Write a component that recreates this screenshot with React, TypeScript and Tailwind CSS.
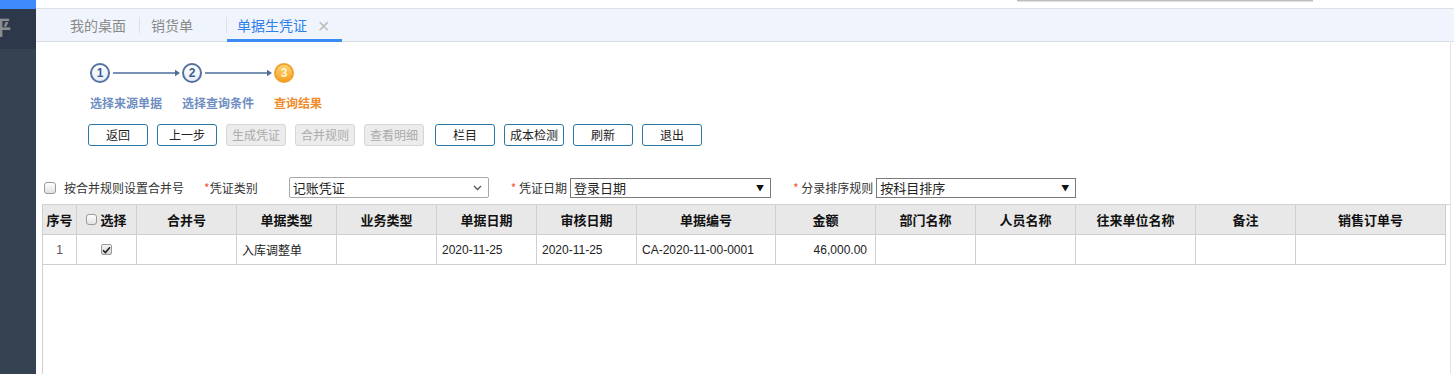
import React from "react";

const cjk = { fontFamily: '"Microsoft YaHei","Noto Sans CJK SC","Liberation Sans",sans-serif' };
const num = { fontFamily: '"Liberation Sans","Noto Sans CJK SC",sans-serif' };

function Circle({ n, active }: { n: number; active?: boolean }) {
  return active ? (
    <div className="w-[20px] h-[20px] rounded-full border-2 border-[#f0a030] bg-gradient-to-b from-[#ffd36a] to-[#f7a11a] flex items-center justify-center text-[12px] font-bold text-[#fff6d8] leading-none" style={num}>
      {n}
    </div>
  ) : (
    <div className="w-[20px] h-[20px] rounded-full border-2 border-[#52729f] bg-gradient-to-b from-white to-[#e6edf7] flex items-center justify-center text-[12px] font-bold text-[#3f5f8f] leading-none" style={num}>
      {n}
    </div>
  );
}

function Arrow() {
  return (
    <svg width="72" height="8" viewBox="0 0 72 8" className="shrink-0">
      <line x1="3" y1="4" x2="66" y2="4" stroke="#4d6c99" strokeWidth="1.3" />
      <path d="M65 0.8 L70 4 L65 7.2 Z" fill="#4d6c99" />
    </svg>
  );
}

function Btn({ label, disabled }: { label: string; disabled?: boolean }) {
  return disabled ? (
    <div className="w-[60px] h-[22px] rounded-[3px] border border-[#d6d6d6] bg-[#ececec] text-[#ababab] text-[12px] flex items-center justify-center">{label}</div>
  ) : (
    <div className="w-[60px] h-[22px] rounded-[3px] border border-[#2a78a8] bg-white text-[#222] text-[12px] flex items-center justify-center">{label}</div>
  );
}

const cols: { t: string; w: number }[] = [
  { t: "序号", w: 34 },
  { t: "选择", w: 60 },
  { t: "合并号", w: 100 },
  { t: "单据类型", w: 100 },
  { t: "业务类型", w: 100 },
  { t: "单据日期", w: 100 },
  { t: "审核日期", w: 100 },
  { t: "单据编号", w: 139 },
  { t: "金额", w: 100 },
  { t: "部门名称", w: 100 },
  { t: "人员名称", w: 100 },
  { t: "往来单位名称", w: 120 },
  { t: "备注", w: 100 },
  { t: "销售订单号", w: 150 },
];

export default function App() {
  return (
    <div className="w-[1454px] h-[374px] overflow-hidden flex bg-white" style={cjk}>
      {/* sidebar */}
      <div className="w-[36px] shrink-0 flex flex-col bg-[#354252]">
        <div className="h-[9px] bg-[#3d8bfd]" />
        <div className="h-[40px] bg-[#2d394a] overflow-hidden relative">
          <span className="absolute left-[-9px] top-[8px] text-[20px] text-[#8a8f96] font-bold leading-none">平</span>
        </div>
        <div className="flex-1" />
      </div>

      {/* main */}
      <div className="flex-1 flex flex-col min-w-0">
        <div className="h-[8px] relative">
          <div className="absolute left-[981px] top-0 w-[296px] h-[1px] bg-[#bdbdbd] shadow-[0_1px_1px_rgba(0,0,0,0.15)]" />
        </div>
        <div className="h-[34px] bg-[#f0f5fd] border-t border-b border-[#dcdfe3] flex items-stretch pl-[34px] text-[14px]">
          <div className="flex items-center text-[#8a8a8a] pr-[13px]">我的桌面</div>
          <div className="w-[1px] bg-[#dde1e6] my-[8px]" />
          <div className="flex items-center text-[#8a8a8a] px-[11px] pr-[33px]">销货单</div>
          <div className="w-[1px] bg-[#dde1e6] my-[8px]" />
          <div className="relative flex items-center pl-[10px] w-[115px] text-[#2f80ed]">
            单据生凭证
            <span className="ml-[10px] text-[#bfbfbf] text-[16px] leading-none">✕</span>
            <div className="absolute left-0 right-0 bottom-[-1px] h-[3px] bg-[#3b8cf5]" />
          </div>
        </div>

        <div className="flex-1 border-r border-[#e4e4e4] mr-[3px] flex flex-col">
          {/* steps */}
          <div className="pl-[54px] pt-[21px] flex items-center h-[41px]">
            <Circle n={1} />
            <Arrow />
            <Circle n={2} />
            <Arrow />
            <Circle n={3} active />
          </div>
          <div className="pl-[54px] pt-[12px] flex text-[12px] font-semibold leading-[16px]">
            <div className="w-[92px] text-[#6e8dc0]">选择来源单据</div>
            <div className="w-[92px] text-[#6e8dc0]">选择查询条件</div>
            <div className="text-[#f08c2c]">查询结果</div>
          </div>
          <div className="pl-[52px] pt-[13px] flex gap-[9px]">
            <Btn label="返回" />
            <Btn label="上一步" />
            <Btn label="生成凭证" disabled />
            <Btn label="合并规则" disabled />
            <Btn label="查看明细" disabled />
            <div className="ml-[2px] flex gap-[9px]">
              <Btn label="栏目" />
              <Btn label="成本检测" />
              <Btn label="刷新" />
              <Btn label="退出" />
            </div>
          </div>

          {/* filters */}
          <div className="pl-[8px] pt-[31px] flex items-center h-[52px] text-[12px] text-[#333]">
            <div className="w-[12px] h-[12px] rounded-[3px] border border-[#9a9a9a] bg-gradient-to-b from-white to-[#e2e2e2]" />
            <span className="ml-[8px]">按合并规则设置合并号</span>
            <span className="ml-[20px]"><span className="text-[#f05a28]">*</span>凭证类别</span>
            <div className="ml-[31px] w-[200px] h-[21px] border border-[#a9a9a9] rounded-[2px] flex items-center justify-between pl-[3px] pr-[6px] text-[13px] text-[#222]">
              <span>记账凭证</span>
              <svg width="9" height="6" viewBox="0 0 9 6"><path d="M1 1 L4.5 4.5 L8 1" fill="none" stroke="#555" strokeWidth="1.3" /></svg>
            </div>
            <span className="ml-[22px]"><span className="text-[#f05a28]">*</span> 凭证日期</span>
            <div className="ml-[3px] w-[201px] h-[20px] border border-[#7a7a7a] flex items-center justify-between pl-[3px] pr-[6px] text-[13px] text-[#222]">
              <span>登录日期</span>
              <span className="text-[8px] text-[#111]">▼</span>
            </div>
            <span className="ml-[22px]"><span className="text-[#f05a28]">*</span> 分录排序规则</span>
            <div className="ml-[3px] w-[200px] h-[20px] border border-[#7a7a7a] flex items-center justify-between pl-[3px] pr-[6px] text-[13px] text-[#222]">
              <span>按科目排序</span>
              <span className="text-[8px] text-[#111]">▼</span>
            </div>
          </div>

          {/* table */}
          <div className="ml-[6px] mt-[6px] flex-1 border-l border-t border-[#d0d0d0]">
            <div className="flex w-max bg-[#e8e8e8] h-[30px] border-b border-[#cfcfcf]">
              {cols.map((c, i) => (
                <div
                  key={c.t}
                  className="border-r border-[#cfcfcf] flex items-center justify-center text-[13px] font-bold text-[#111] shrink-0"
                  style={{ width: c.w }}
                >
                  {i === 1 ? (
                    <span className="flex items-center gap-[3px]">
                      <span className="w-[11px] h-[11px] rounded-[3px] border border-[#9a9a9a] bg-gradient-to-b from-white to-[#e2e2e2]" />
                      选择
                    </span>
                  ) : (
                    c.t
                  )}
                </div>
              ))}
            </div>
            <div className="flex w-max h-[30px] text-[12px] text-[#222]">
              {cols.map((c, i) => {
                let content: React.ReactNode = null;
                let align = "justify-start pl-[5px]";
                if (i === 0) {
                  content = <span className="text-[#555]" style={num}>1</span>;
                  align = "justify-center";
                } else if (i === 1) {
                  align = "justify-center";
                  content = (
                    <span className="w-[11px] h-[11px] rounded-[2px] border border-[#9a9a9a] bg-gradient-to-b from-[#f4f4f4] to-[#d6d6d6] flex items-center justify-center">
                      <svg width="9" height="8" viewBox="0 0 9 8"><path d="M1 4.2 L3.4 6.6 L8 1.2" fill="none" stroke="#222" strokeWidth="1.6" /></svg>
                    </span>
                  );
                } else if (i === 3) content = <span>入库调整单</span>;
                else if (i === 5 || i === 6) content = <span style={num}>2020-11-25</span>;
                else if (i === 7) content = <span style={num}>CA-2020-11-00-0001</span>;
                else if (i === 8) {
                  content = <span style={num}>46,000.00</span>;
                  align = "justify-end pr-[8px]";
                }
                return (
                  <div key={c.t} className={`border-r border-b border-[#cfcfcf] flex items-center shrink-0 ${align}`} style={{ width: c.w }}>
                    {content}
                  </div>
                );
              })}
            </div>
          </div>
        </div>
      </div>
    </div>
  );
}
